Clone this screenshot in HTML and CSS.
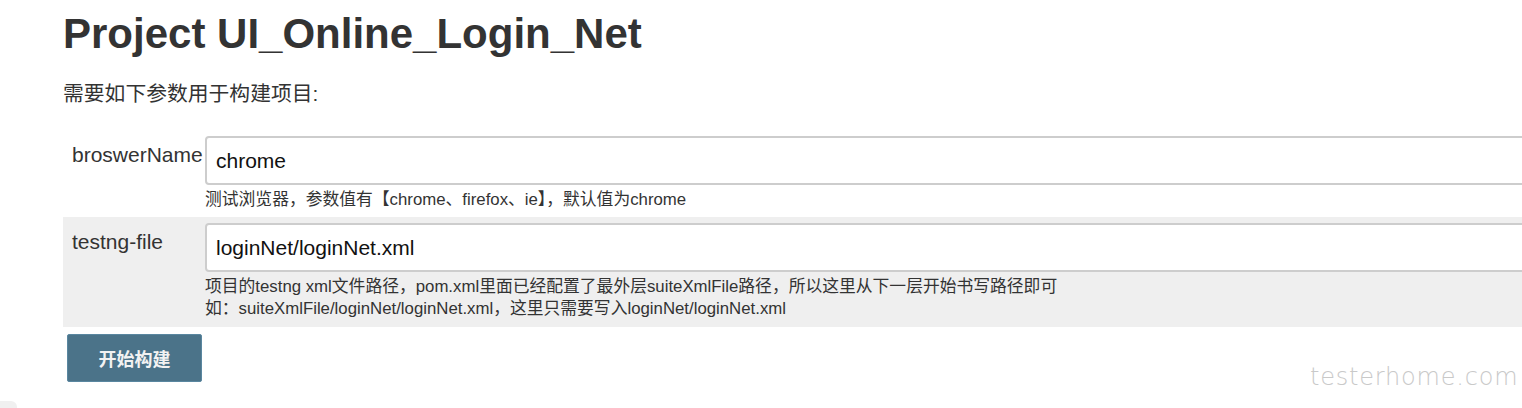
FILE: index.html
```html
<!DOCTYPE html>
<html lang="zh-CN">
<head>
  <meta charset="UTF-8" />
  <title>Project UI_Online_Login_Net</title>
  <link rel="stylesheet" href="styles.css">
</head>
<body>
  <div class="page">
    <h1>Project UI_Online_Login_Net</h1>
    <p class="intro">需要如下参数用于构建项目:</p>

    <!-- Parametros del build -->
    <form class="params">
      <div class="param">
        <label class="param-name" for="browserName">broswerName</label>
        <div class="param-value">
          <input type="text" id="browserName" value="chrome" />
          <div class="param-desc">测试浏览器，参数值有【chrome、firefox、ie】，默认值为chrome</div>
        </div>
      </div>

      <div class="param shaded">
        <label class="param-name" for="testngFile">testng-file</label>
        <div class="param-value">
          <input type="text" id="testngFile" value="loginNet/loginNet.xml" />
          <div class="param-desc">项目的testng xml文件路径，pom.xml里面已经配置了最外层suiteXmlFile路径，所以这里从下一层开始书写路径即可<br>如：suiteXmlFile/loginNet/loginNet.xml，这里只需要写入loginNet/loginNet.xml</div>
        </div>
      </div>

      <button type="submit" class="build-btn">开始构建</button>
    </form>
  </div>

  <div class="watermark">testerhome.com</div>
  <div class="corner"></div>
</body>
</html>
```

FILE: styles.css
```css
/* Estilos básicos */
html, body {
  margin: 0;
  overflow: hidden;
}

body {
  font-family: "Liberation Sans", Arial, "Noto Sans CJK SC", sans-serif;
  color: #333;
  background: #fff;
  width: 1522px;
  height: 408px;
  position: relative;
}

.page {
  padding: 10px 0 0 63px;
}

h1 {
  margin: 0;
  font-size: 42px;
  line-height: 47px;
  font-weight: bold;
  color: #333;
}

.intro {
  margin: 25px 0 0 0;
  font-size: 20.8px;
  line-height: 24px;
}

.params {
  margin-top: 24px;
  width: 1560px;
}

.param {
  display: flex;
  padding: 6px 0 6px 0;
}

.param.shaded {
  background: #efefef;
  padding-bottom: 7px;
}

.param-name {
  width: 133px;
  flex: none;
  padding: 7px 0 0 9px;
  font-size: 21px;
  line-height: 24px;
  color: #333;
}

.param-value {
  flex: 1;
}

.param-value input {
  display: block;
  box-sizing: border-box;
  width: 100%;
  height: 49px;
  margin: 0;
  padding: 0 0 0 9px;
  border: 2px solid #cdcdcd;
  border-radius: 4px;
  background: #fff;
  font-family: "Liberation Sans", Arial, sans-serif;
  font-size: 21px;
  color: #111;
}

.param-desc {
  margin-top: 4px;
  font-size: 16.8px;
  line-height: 22px;
  color: #333;
}

.build-btn {
  display: block;
  margin: 7px 0 0 4px;
  width: 135px;
  height: 48px;
  padding: 0;
  background: #4b7389;
  border: 1px solid #5a87a0;
  border-radius: 2px;
  color: #f2f2f2;
  font-family: "Noto Sans CJK SC", sans-serif;
  font-size: 18px;
  font-weight: bold;
  cursor: pointer;
}

.watermark {
  position: absolute;
  left: 1310px;
  top: 363px;
  font-family: "DejaVu Sans", sans-serif;
  font-weight: 200;
  font-size: 24px;
  letter-spacing: 0.8px;
  color: #c9c9c9;
}

.corner {
  position: absolute;
  left: -6px;
  top: 401px;
  width: 23px;
  height: 16px;
  border-radius: 6px;
  background: #f0f0f0;
}
```
